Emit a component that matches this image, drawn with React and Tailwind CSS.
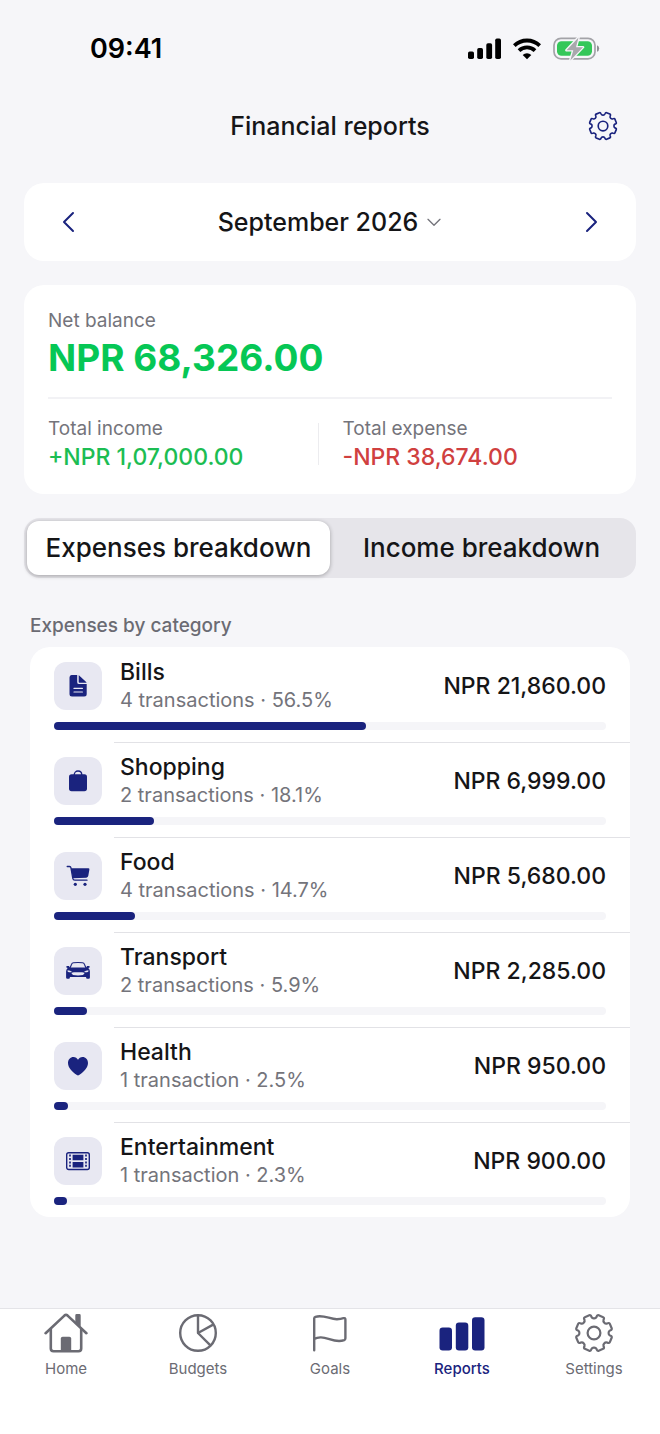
import { useState } from "react";

const categories = [
  { name: "Bills", icon: BillIcon, count: 4, share: 56.5, amount: "21,860.00" },
  { name: "Shopping", icon: BagIcon, count: 2, share: 18.1, amount: "6,999.00" },
  { name: "Food", icon: CartIcon, count: 4, share: 14.7, amount: "5,680.00" },
  { name: "Transport", icon: CarIcon, count: 2, share: 5.9, amount: "2,285.00" },
  { name: "Health", icon: HeartIcon, count: 1, share: 2.5, amount: "950.00" },
  { name: "Entertainment", icon: FilmIcon, count: 1, share: 2.3, amount: "900.00" },
];

const tabs = [
  { label: "Home", icon: HomeIcon },
  { label: "Budgets", icon: PieIcon },
  { label: "Goals", icon: FlagIcon },
  { label: "Reports", icon: BarsIcon },
  { label: "Settings", icon: GearIcon },
];

// One tooth and one notch, repeated eight times around the centre.
function gearPath() {
  const at = (r, deg) => {
    const a = ((deg - 90) * Math.PI) / 180;
    return `${(20 + r * Math.cos(a)).toFixed(2)} ${(20 + r * Math.sin(a)).toFixed(2)}`;
  };
  let d = `M${at(14.6, 0)}`;
  for (let i = 0; i < 8; i++) {
    const n = i * 45;
    d += `Q${at(14.6, n + 7)} ${at(16.2, n + 9)}`;
    d += `Q${at(18.6, n + 10)} ${at(18.3, n + 15)}`;
    d += `L${at(18.3, n + 30)}`;
    d += `Q${at(18.6, n + 35)} ${at(16.2, n + 36)}`;
    d += `Q${at(14.6, n + 38)} ${at(14.6, n + 45)}`;
  }
  return d + "Z";
}

const GEAR = gearPath();

function GearIcon({ className = "size-10" }) {
  return (
    <svg viewBox="0 0 40 40" className={className} fill="none" stroke="currentColor" strokeWidth="2.2" strokeLinejoin="round" aria-hidden="true">
      <path d={GEAR} />
      <circle cx="20" cy="20" r="6.4" />
    </svg>
  );
}

function HomeIcon() {
  return (
    <svg viewBox="0 0 44 40" className="h-10 w-11" fill="none" stroke="currentColor" strokeWidth="2.6" strokeLinecap="round" strokeLinejoin="round" aria-hidden="true">
      <path d="M1.6 20.2 20.4 2.6Q22 1.2 23.6 2.6L42.4 20.2" />
      <path d="M6.8 16v19.5q0 2.7 2.7 2.7h25q2.7 0 2.7-2.7V16" />
      <path d="M32.6 2.4h2.8v10l-2.8-2.6z" fill="currentColor" />
      <path d="M16.8 38V25.5q0-1.8 1.8-1.8h6.8q1.8 0 1.8 1.8V38z" fill="currentColor" stroke="none" />
    </svg>
  );
}

function PieIcon() {
  return (
    <svg viewBox="0 0 40 40" className="size-10" fill="none" stroke="currentColor" strokeWidth="2.4" strokeLinejoin="round" aria-hidden="true">
      <circle cx="20" cy="20" r="17.8" />
      <path d="M20 2.2V20l15.6-8.6M20 20l12.4 12.4" />
    </svg>
  );
}

function FlagIcon() {
  return (
    <svg viewBox="0 0 40 40" className="size-10" fill="none" stroke="currentColor" strokeWidth="2.4" strokeLinecap="round" strokeLinejoin="round" aria-hidden="true">
      <path d="M4.2 37.2V5.4Q4.2 4.2 5.4 3.8C13.5 1.2 20 6.4 27 6.2q3.8-.1 6.5-1 1.900-.5 1.900 1.300v18.800q0 1.300-1.200 1.800C25 30.600 18 24 10.500 24.400q-3.600.2-6.300 1.400" />
    </svg>
  );
}

function BarsIcon() {
  return (
    <svg viewBox="0 0 46 40" className="h-10 w-[46px]" fill="currentColor" aria-hidden="true">
      <rect x="0.5" y="14.5" width="12.5" height="23" rx="3.2" />
      <rect x="16.8" y="9.5" width="12.5" height="28" rx="3.2" />
      <rect x="33" y="4.2" width="12.5" height="33.3" rx="3.2" />
    </svg>
  );
}

function BillIcon() {
  return (
    <svg viewBox="0 0 24 24" className="size-6" aria-hidden="true">
      <path fill="currentColor" d="M5.5 1h5.700v7.200q0 1.900 1.900 1.900h7.600v9.900q0 2.500-2.500 2.500H6q-2.500 0-2.500-2.500V3.500Q3.500 1 5.500 1zM12.700 1.300q.5.200 1 .7l6.200 5.800q.5.500.7 1h-7.200q-.7 0-.7-.7z" />
      <path stroke="#e8e8f2" strokeWidth="1.2" strokeLinecap="round" d="M8 14.400h8.400M8 18h8.400" />
    </svg>
  );
}

function BagIcon() {
  return (
    <svg viewBox="0 0 24 24" className="size-6" aria-hidden="true">
      <rect x="3" y="5.2" width="18" height="17" rx="2.6" fill="currentColor" />
      <path fill="none" stroke="currentColor" strokeWidth="1.3" d="M8.200 6C8.200 3.600 9.800 2 12 2s3.800 1.600 3.800 4" />
    </svg>
  );
}

function CartIcon() {
  return (
    <svg viewBox="0 0 24 24" className="size-6" aria-hidden="true">
      <path fill="none" stroke="currentColor" strokeWidth="1.3" strokeLinecap="round" strokeLinejoin="round" d="M1.200 2.500h2.300q1.200 0 1.400 1.200l1.900 10.800q.3 1.700 2 1.700H21" />
      <path fill="currentColor" d="M5 4.300h17.300q1.300 0 1.100 1.300l-1.100 6.200q-.3 1.700-2 1.900l-13.400.5z" />
      <circle cx="9.3" cy="20.3" r="1.6" fill="currentColor" />
      <circle cx="19" cy="20.3" r="1.6" fill="currentColor" />
    </svg>
  );
}

function CarIcon() {
  return (
    <svg viewBox="0 0 24 24" className="size-6" aria-hidden="true">
      <path fill="none" stroke="currentColor" strokeWidth="1.1" d="M3.800 9.500 5.600 5.200q.5-1.300 1.900-1.500Q12 3.200 16.500 3.700q1.400.2 1.900 1.500l1.800 4.300" />
      <path fill="currentColor" d="M.2 8q0-.9 1-.9h1.700l1 1.400h16.200l1-1.400h1.700q1 0 1 .9 0 .7-.9.800l-.6.1q1.500 1.300 1.600 3.300V18.500q0 1.200-1.200 1.200h-1.400q-1.200 0-1.200-1.200v-.4H3.900v.4q0 1.200-1.200 1.200H1.300q-1.200 0-1.200-1.200V12.200Q.2 10.200 1.700 8.900l-.6-.1Q.2 8.700.2 8z" />
      <path fill="#e8e8f2" d="M1.600 11.200q2.700.1 4.600 1.800-2.600.7-4.300-.2-.6-.5-.3-1.600zM22.400 11.200q-2.700.1-4.600 1.800 2.600.7 4.300-.2.600-.5.300-1.600zM8 13.200h8q1.800 0 2.600 1l-1.600 1.800q-5 .8-10 0l-1.600-1.800q.8-1 2.600-1z" />
    </svg>
  );
}

function HeartIcon() {
  return (
    <svg viewBox="0 0 24 24" className="size-6" fill="currentColor" aria-hidden="true">
      <path d="M12 21.400c-.3 0-.7-.2-1.100-.5C5.500 17.300 2 13.200 2 8.900 2 5.400 4.400 2.900 7.500 2.900c2 0 3.600 1.100 4.500 2.800.9-1.700 2.500-2.800 4.500-2.800 3.100 0 5.500 2.500 5.500 6 0 4.300-3.500 8.400-8.900 12-.4.300-.8.500-1.100.5z" />
    </svg>
  );
}

function FilmIcon() {
  return (
    <svg viewBox="0 0 24 24" className="size-6" aria-hidden="true">
      <rect x=".7" y="3.7" width="22.6" height="16.8" rx="2" fill="none" stroke="currentColor" strokeWidth="1.4" />
      <path fill="currentColor" d="M6.600 5.800h10.800v5.400H6.600zM6.600 13h10.800v5.400H6.600z" />
      <path stroke="currentColor" strokeWidth="1.7" strokeDasharray="2 1.4" d="M4 5.600v13M20 5.600v13" />
    </svg>
  );
}

function Chevron({ className, d }) {
  return (
    <svg viewBox="0 0 24 24" className={className} fill="none" stroke="currentColor" strokeLinecap="round" strokeLinejoin="round" aria-hidden="true">
      <path d={d} />
    </svg>
  );
}

function StatusBar() {
  return (
    <div className="flex h-[97px] items-center justify-between pr-[60px] pl-[90px] text-black">
      <span className="text-[27px] leading-8 font-semibold">09:41</span>
      <div className="flex items-center gap-3">
        <svg viewBox="0 0 33 22" className="h-[22px] w-[33px]" fill="currentColor" aria-hidden="true">
          <rect x="0" y="13.5" width="6" height="7.5" rx="1.7" />
          <rect x="9.2" y="10" width="5.8" height="11" rx="1.7" />
          <rect x="18.3" y="5.2" width="5.8" height="15.800" rx="1.7" />
          <rect x="27.200" y="0.6" width="5.8" height="20.400" rx="1.7" />
        </svg>
        <svg viewBox="0 0 28 22" className="h-[22px] w-7" fill="none" stroke="currentColor" strokeWidth="3.8" aria-hidden="true">
          <path d="M1.300 7.600a18.300 18.300 0 0 1 25.400 0" />
          <path d="M6 12.700a11.500 11.500 0 0 1 16 0" />
          <path d="M14 21.200 9.700 16.900a6.200 6.200 0 0 1 8.600 0z" fill="currentColor" stroke="none" />
        </svg>
        <svg viewBox="0 0 47 24" className="h-6 w-[47px]" aria-hidden="true">
          <rect x="1" y="1.300" width="41" height="20.500" rx="7" fill="none" stroke="#a3a3a8" strokeWidth="1.7" />
          <path d="M44 8.300v6.500q2.200-.8 2.200-3.200T44 8.300z" fill="#8f8f94" />
          <rect x="4" y="4.300" width="35" height="14.500" rx="4.500" fill="#34c759" />
          <path d="M25.500.4 13.500 13.200h6.800L17.300 23.400 30 10.200h-7z" fill="#a9a8ad" stroke="#f6f6f9" strokeWidth="2.6" paintOrder="stroke" strokeLinejoin="round" />
        </svg>
      </div>
    </div>
  );
}

function CategoryRow({ item }) {
  const Icon = item.icon;
  return (
    <li className="group">
      <div className="ml-[84px] h-px bg-[#e2e2e6] group-first:bg-transparent" />
      <div className="px-6 pt-[10px] pb-3">
        <div className="flex items-center">
          <span className="mr-[18px] flex size-12 items-center justify-center rounded-xl bg-[#e8e8f2] text-[#1a237e]">
            <Icon />
          </span>
          <div className="flex-1">
            <p className="text-[23px] leading-7 font-medium">{item.name}</p>
            <p className="text-[20px] leading-7 text-[#74747b]">
              {item.count} {item.count === 1 ? "transaction" : "transactions"} · {item.share}%
            </p>
          </div>
          <p className="text-[23px] leading-7 font-medium">NPR {item.amount}</p>
        </div>
        <div className="mt-2 h-2 rounded-full bg-[#f5f5f8]">
          <div className="h-2 rounded-full bg-[#1a237e]" style={{ width: `${item.share}%` }} />
        </div>
      </div>
    </li>
  );
}

export default function App() {
  const [breakdown, setBreakdown] = useState("Expenses");

  return (
    <div className="flex min-h-screen flex-col bg-[#f6f6f9] font-['Inter',sans-serif] text-[#151517]">
      <StatusBar />

      <header className="grid h-[58px] grid-cols-[1fr_auto_1fr] items-center px-[42px]">
        <h1 className="col-start-2 text-[25px] leading-8 font-medium">Financial reports</h1>
        <button type="button" aria-label="Report settings" className="justify-self-end text-[#1a237e]">
          <GearIcon className="size-[30px]" />
        </button>
      </header>

      <main className="flex-1 px-6 pt-7">
        <section className="flex h-[78px] items-center justify-between rounded-[20px] bg-white px-8">
          <button type="button" aria-label="Previous month" className="text-[#1a237e]">
            <Chevron className="size-6 stroke-2" d="M17 3 8 12l9 9" />
          </button>
          <button type="button" className="flex items-center gap-2 text-[25px] leading-8 font-medium">
            September 2026
            <Chevron className="size-4 stroke-2 text-[#74747b]" d="M3 8l9 9 9-9" />
          </button>
          <button type="button" aria-label="Next month" className="text-[#1a237e]">
            <Chevron className="size-6 stroke-2" d="M7 3l9 9-9 9" />
          </button>
        </section>

        <section className="mt-6 rounded-[20px] bg-white px-6 pt-[22px] pb-[23px]">
          <p className="text-[19px] leading-7 text-[#74747b]">Net balance</p>
          <p className="text-[37px] leading-[46px] font-bold text-[#06c755]">NPR 68,326.00</p>
          <div className="mt-4 flex border-t-2 border-[#f2f2f5] pt-4">
            <div className="flex-1">
              <p className="text-[19px] leading-7 text-[#74747b]">Total income</p>
              <p className="text-[23px] leading-7 font-medium text-[#1cbd53]">+NPR 1,07,000.00</p>
            </div>
            <div className="mt-2 mr-6 h-[42px] w-px bg-[#ececef]" />
            <div className="flex-1">
              <p className="text-[19px] leading-7 text-[#74747b]">Total expense</p>
              <p className="text-[23px] leading-7 font-medium text-[#d0403f]">-NPR 38,674.00</p>
            </div>
          </div>
        </section>

        <div className="mt-6 grid grid-cols-2 rounded-2xl bg-[#e6e5ea] p-[3px]">
          {["Expenses", "Income"].map((kind) => (
            <button
              key={kind}
              type="button"
              aria-pressed={breakdown === kind}
              onClick={() => setBreakdown(kind)}
              className={`h-[54px] rounded-xl text-[26px] leading-8 font-medium ${
                breakdown === kind ? "bg-white shadow-[0_1px_4px_rgba(0,0,0,0.3)]" : ""
              }`}
            >
              {kind} breakdown
            </button>
          ))}
        </div>

        <section className="mx-[6px] mt-[34px]">
          <h2 className="text-[19px] leading-7 font-medium text-[#6b6b73]">Expenses by category</h2>
          <ul className="mt-[7px] overflow-hidden rounded-[20px] bg-white">
            {categories.map((item) => (
              <CategoryRow key={item.name} item={item} />
            ))}
          </ul>
        </section>
      </main>

      <nav className="grid h-[126px] grid-cols-5 items-start border-t border-[#e4e4e8] bg-white pt-1">
        {tabs.map(({ label, icon: Icon }) => (
          <a
            key={label}
            href={`#${label.toLowerCase()}`}
            className={`flex flex-col items-center gap-[6px] text-[15px] leading-5 ${
              label === "Reports" ? "font-medium text-[#1a237e]" : "text-[#6b6b73]"
            }`}
          >
            <Icon />
            {label}
          </a>
        ))}
      </nav>
    </div>
  );
}
